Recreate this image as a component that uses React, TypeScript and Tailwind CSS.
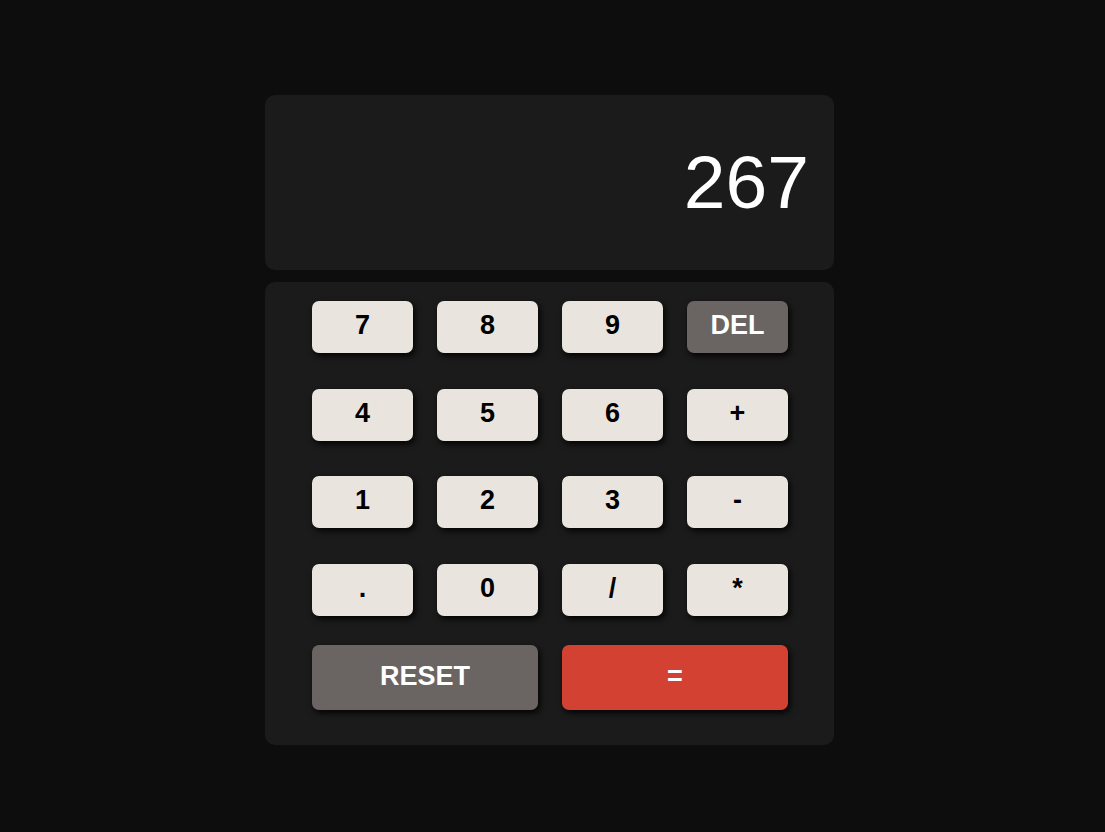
const keys = [
  ["7", "8", "9", "DEL"],
  ["4", "5", "6", "+"],
  ["1", "2", "3", "-"],
  [".", "0", "/", "*"],
];

const rowMargins = ["mt-0", "mt-[36px]", "mt-[35px]", "mt-[36px]"];

const Key = ({ label }: { label: string }) => {
  const isDel = label === "DEL";
  return (
    <button
      className={
        isDel
          ? "w-[101px] h-[52px] pb-[3px] rounded-[7px] bg-[#6a6463] text-white text-[27px] font-bold shadow-[2px_3px_6px_rgba(0,0,0,0.9)]"
          : "w-[101px] h-[52px] pb-[3px] rounded-[7px] bg-[#eae4de] text-black text-[27px] font-bold shadow-[2px_3px_6px_rgba(0,0,0,0.9)]"
      }
    >
      {label}
    </button>
  );
};

export default function App() {
  return (
    <div
      className="min-h-[832px] w-full bg-[#0d0d0d] flex justify-center pt-[95px] pr-[6px]"
      style={{ fontFamily: '"Liberation Sans", Arial, sans-serif' }}
    >
      <div className="w-[569px] flex flex-col gap-[12px]">
        <div className="h-[175px] rounded-[10px] bg-[#1b1b1b] flex items-center justify-end pr-[25px]">
          <span className="text-[75px] leading-none text-white">267</span>
        </div>
        <div className="rounded-[10px] bg-[#1b1b1b] pt-[19px] pb-[35px] pl-[47px] pr-[46px] flex flex-col">
          {keys.map((row, i) => (
            <div key={i} className={`flex gap-[24px] ${rowMargins[i]}`}>
              {row.map((k) => (
                <Key key={k} label={k} />
              ))}
            </div>
          ))}
          <div className="flex gap-[24px] mt-[29px]">
            <button className="w-[226px] h-[65px] pb-[3px] rounded-[7px] bg-[#6a6463] text-white text-[27px] font-bold shadow-[2px_3px_6px_rgba(0,0,0,0.9)]">
              RESET
            </button>
            <button className="w-[226px] h-[65px] pb-[3px] rounded-[7px] bg-[#d34133] text-white text-[27px] font-bold shadow-[2px_3px_6px_rgba(0,0,0,0.9)]">
              =
            </button>
          </div>
        </div>
      </div>
    </div>
  );
}
